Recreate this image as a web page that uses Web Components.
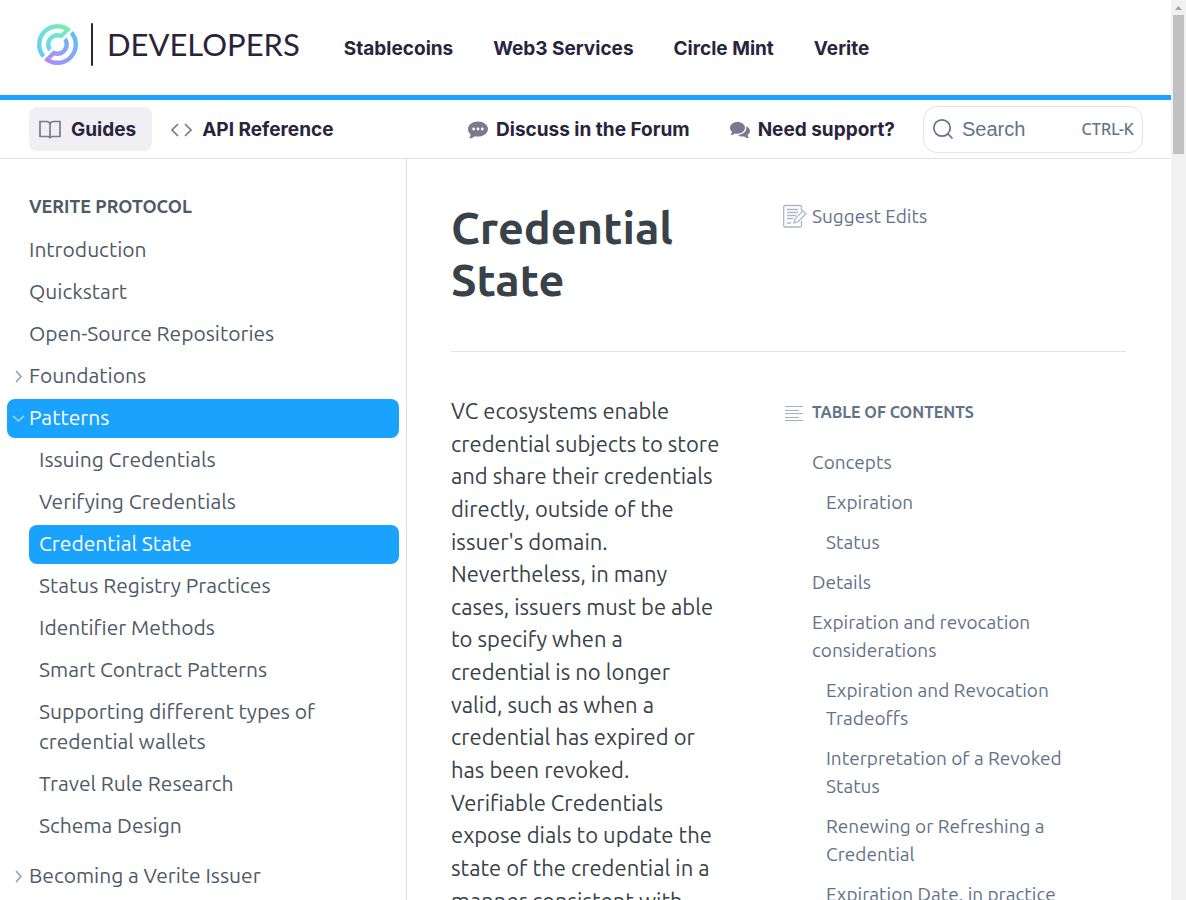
<!DOCTYPE html>
<html lang="en">
<head>
<meta charset="utf-8">
<meta name="viewport" content="width=device-width, initial-scale=1">
<title>Credential State</title>
<style>
  html, body { margin: 0; height: 100%; background: #fff; }
  body {
    font-family: Ubuntu, "Noto Sans", sans-serif;
    color: #384248;
    --brand: #1aa2ff;
    --ink: #29233b;
    --muted: #637288;
    --side: #4f5a66;
    --line: #e3e3e5;
    --header-font: Inter, "Open Sans", sans-serif;
  }
</style>
</head>
<body>
<docs-app>
  <site-header slot="header"></site-header>
  <sub-nav slot="subnav"></sub-nav>
  <side-nav slot="side" heading="Verite Protocol">
    <side-item>Introduction</side-item>
    <side-item>Quickstart</side-item>
    <side-item>Open-Source Repositories</side-item>
    <side-item arrow="right">Foundations</side-item>
    <side-item arrow="down" active>Patterns</side-item>
    <side-group>
      <side-item child>Issuing Credentials</side-item>
      <side-item child>Verifying Credentials</side-item>
      <side-item child active>Credential State</side-item>
      <side-item child>Status Registry Practices</side-item>
      <side-item child>Identifier Methods</side-item>
      <side-item child>Smart Contract Patterns</side-item>
      <side-item child>Supporting different types of credential wallets</side-item>
      <side-item child>Travel Rule Research</side-item>
      <side-item child>Schema Design</side-item>
    </side-group>
    <side-item arrow="right">Becoming a Verite Issuer</side-item>
  </side-nav>
  <doc-article heading="Credential State">
    <p>VC ecosystems enable credential subjects to store and share their credentials directly, outside of the issuer's domain. Nevertheless, in many cases, issuers must be able to specify when a credential is no longer valid, such as when a credential has expired or has been revoked. Verifiable Credentials expose dials to update the state of the credential in a manner consistent with</p>
    <toc-list slot="toc">
      <toc-item>Concepts</toc-item>
      <toc-item sub>Expiration</toc-item>
      <toc-item sub>Status</toc-item>
      <toc-item>Details</toc-item>
      <toc-item>Expiration and revocation considerations</toc-item>
      <toc-item sub>Expiration and Revocation Tradeoffs</toc-item>
      <toc-item sub>Interpretation of a Revoked Status</toc-item>
      <toc-item sub>Renewing or Refreshing a Credential</toc-item>
      <toc-item sub>Expiration Date, in practice</toc-item>
    </toc-list>
  </doc-article>
</docs-app>

<script>
const define = (name, render) => customElements.define(name, class extends HTMLElement {
  connectedCallback() {
    if (this.shadowRoot) return;
    this.attachShadow({ mode: 'open' }).innerHTML = render(this);
  }
});

define('docs-app', () => `
<style>
  :host { display: grid; grid-template-columns: minmax(0, 1fr) 15px; height: 100vh; overflow: hidden; }
  .page { display: flex; flex-direction: column; min-height: 0; }
  .body { display: flex; flex: 1; min-height: 0; }
  .side { flex: none; width: 406px; border-right: 1px solid #dcdfe2; overflow: auto; scrollbar-width: none; }
  main { flex: 1; min-width: 0; overflow: auto; scrollbar-width: none; }
</style>
<div class="page">
  <slot name="header"></slot>
  <slot name="subnav"></slot>
  <div class="body">
    <div class="side"><slot name="side"></slot></div>
    <main><slot></slot></main>
  </div>
</div>
<page-scrollbar></page-scrollbar>`);

define('page-scrollbar', () => `
<style>
  :host { display: block; background: #f1f1f1; }
  svg { display: block; height: 15px; }
  div { height: 139px; margin: 0 2px; background: #c1c1c1; }
</style>
<svg width="15" height="15" aria-hidden="true"><path d="M4 10h7L7.500 6z" fill="#a3a3a3"/></svg>
<div></div>`);

define('site-header', () => `
<style>
  :host { display: block; flex: none; border-bottom: 5px solid var(--brand); }
  header { display: flex; align-items: center; gap: 44px; height: 95px; padding: 0 36px; box-sizing: border-box; }
  a { color: var(--ink); text-decoration: none; }
  .logo { display: flex; align-items: center; height: 44px; padding-bottom: 7px; }
  .bar { width: 2px; height: 43px; margin: 0 14px 0 12px; background: var(--ink); border-radius: 1px; }
  .word { font: 400 31px/44px Lato, sans-serif; }
  nav { display: flex; gap: 40px; padding-top: 2px; font: 700 19px/24px var(--header-font); }
</style>
<header>
  <a class="logo" href="#" aria-label="Circle Developers">
    <svg width="43" height="43" viewBox="0 0 43 43" fill="none" stroke-width="4.400" aria-hidden="true">
      <defs>
        <linearGradient id="a" gradientUnits="userSpaceOnUse" x1="5" y1="35" x2="34" y2="5"><stop offset="0" stop-color="#5fcdf8"/><stop offset=".5" stop-color="#6fdfdc"/><stop offset="1" stop-color="#79efa8"/></linearGradient>
        <linearGradient id="b" gradientUnits="userSpaceOnUse" x1="10" y1="38" x2="38" y2="10"><stop offset="0" stop-color="#b18af5"/><stop offset=".5" stop-color="#8ba3fa"/><stop offset="1" stop-color="#5cc0fa"/></linearGradient>
        <clipPath id="c"><path d="M-5-5h51L-5 46z"/></clipPath>
        <clipPath id="d"><path d="M48 48H-3L48-3z"/></clipPath>
      </defs>
      <g stroke="url(#a)" clip-path="url(#c)"><circle cx="21.500" cy="21.500" r="18.300"/><circle cx="21.500" cy="21.500" r="9.200"/><path d="M25.500 13.100l7.200-7.200"/></g>
      <g stroke="url(#b)" clip-path="url(#d)"><circle cx="21.500" cy="21.500" r="18.300"/><circle cx="21.500" cy="21.500" r="9.200"/><path d="M17.500 29.900l-7.200 7.200"/></g>
    </svg>
    <span class="bar"></span><span class="word">DEVELOPERS</span>
  </a>
  <nav aria-label="Products"><a href="#">Stablecoins</a><a href="#">Web3 Services</a><a href="#">Circle Mint</a><a href="#">Verite</a></nav>
</header>`);

define('sub-nav', () => `
<style>
  :host { display: block; flex: none; border-bottom: 1px solid var(--line); }
  .row { display: flex; align-items: center; height: 58px; padding: 0 28px 0 29px; font: 700 19px/24px var(--header-font); }
  a { display: flex; align-items: center; gap: 10px; height: 44px; padding-top: 2px; box-sizing: border-box; color: var(--ink); text-decoration: none; white-space: nowrap; }
  nav { display: flex; gap: 8px; }
  nav a { padding: 2px 16px 0 10px; border-radius: 8px; }
  nav a[aria-current] { background: #f0eff4; }
  .help { display: flex; gap: 40px; margin: 0 28px 0 auto; }
  .help a { gap: 8px; }
  svg { flex: none; }
  button {
    display: flex; align-items: center; gap: 8px; width: 220px; height: 47px; padding: 0 8px;
    background: #fff; border: 1px solid var(--line); border-radius: 14px; box-sizing: border-box;
    color: var(--muted); font: 400 20px/24px "Liberation Sans", Arial, sans-serif; text-align: left; cursor: pointer;
  }
  kbd { margin-left: auto; font: 500 16px/24px Ubuntu, "Noto Sans", sans-serif; }
</style>
<div class="row">
  <nav aria-label="Sections">
    <a href="#" aria-current="page">
      <svg width="22" height="20" viewBox="0 0 22 20" fill="none" stroke="#7d788c" stroke-width="1.700" aria-hidden="true"><path d="M1 1.500h6.500c2 0 3.500 1.500 3.500 3v14c0-1.300-1-2-2.500-2H1zM21 1.500h-6.500c-2 0-3.500 1.500-3.500 3v14c0-1.300 1-2 2.500-2H21z"/></svg>Guides</a>
    <a href="#">
      <svg width="22" height="16" viewBox="0 0 22 16" fill="none" stroke="#7d788c" stroke-width="1.700" aria-hidden="true"><path d="M8 2 2 8l6 6M15 2l6 6-6 6"/></svg>API Reference</a>
  </nav>
  <div class="help">
    <a href="#">
      <svg width="20" height="18" viewBox="0 0 20 18" aria-hidden="true"><path fill="#7d788c" d="M10 .5C4.600.5 0 3.700 0 8c0 2.100 1 3.900 2.600 5.200-.1 1.400-.5 2.700-1.300 4.300 2.200-.2 4.200-1 5.600-2.200 1 .2 2 .3 3.100.3 5.500 0 10-3.300 10-7.600S15.500.5 10 .5z"/><g fill="#fff"><circle cx="5.700" cy="8" r="1.400"/><circle cx="10" cy="8" r="1.400"/><circle cx="14.300" cy="8" r="1.400"/></g></svg>Discuss in the Forum</a>
    <a href="#">
      <svg width="20" height="18" viewBox="0 0 20 18" fill="#7d788c" aria-hidden="true"><path d="M7.500 1C3.400 1 0 3.500 0 6.800c0 1.600.8 3 2 4-.1 1.300-.6 2.300-1.400 3.300 1.600 0 3.100-.6 4.200-1.700.9.200 1.700.3 2.700.3 4.200 0 7.500-2.600 7.500-5.900S11.700 1 7.500 1z"/><path d="M16.300 5.300c.8 4.800-3 8.500-8.300 8.600 1.300 1.200 3.600 1.900 6.200 1.500 1.300 1 2.700 1.500 4.800 1.500-.9-1-1.300-2-1.400-3.200 1.500-.9 2.300-2 2.400-3.400.1-2.200-1.400-4-3.700-5z"/></svg>Need support?</a>
  </div>
  <button type="button">
    <svg width="22" height="22" viewBox="0 0 22 22" fill="none" stroke="currentColor" stroke-width="1.700" aria-hidden="true"><circle cx="10" cy="10" r="8.200"/><path d="m16 16 4.500 4.500"/></svg>
    <span>Search</span><kbd>CTRL-K</kbd>
  </button>
</div>`);

define('side-nav', el => `
<style>
  :host { display: block; }
  nav { display: flex; flex-direction: column; gap: 3px; padding: 36px 7px 20px; }
  h2 { margin: 0 0 11px; padding-left: 22px; font: 700 18px/22px Ubuntu, "Noto Sans", sans-serif; color: var(--side); text-transform: uppercase; }
</style>
<nav aria-label="${el.getAttribute('heading')}"><h2>${el.getAttribute('heading')}</h2><slot></slot></nav>`);

define('side-group', () => `
<style>:host { display: flex; flex-direction: column; gap: 3px; padding: 0 0 8px 22px; }</style>
<slot></slot>`);

define('side-item', el => {
  const arrow = el.getAttribute('arrow');
  const d = arrow === 'down' ? 'M1 4l5.500 5L12 4' : 'M4 1l5 5.500L4 12';
  return `
<style>
  :host { display: block; }
  a { display: flex; align-items: flex-start; padding: 3px 48px 6px 22px; border-radius: 8px; color: var(--side); font-size: 21px; line-height: 30px; text-decoration: none; }
  svg { flex: none; margin: 10px 4px 0 -17px; opacity: .6; }
  :host([child]) a { padding-left: 10px; }
  :host([active]) a { background: var(--brand); color: #fff; }
</style>
<a href="#"${el.hasAttribute('active') ? ' aria-current="true"' : ''}>${arrow ? `<svg width="13" height="13" viewBox="0 0 13 13" fill="none" stroke="currentColor" stroke-width="1.500" aria-hidden="true"><path d="${d}"/></svg>` : ''}<span><slot></slot></span></a>`;
});

define('doc-article', el => `
<style>
  :host { display: block; padding: 0 45px 0 44px; }
  .cols { display: grid; grid-template-columns: 40% minmax(0, 1fr); gap: 62px; }
  header { padding: 43px 0 45px; border-bottom: 1px solid var(--line); }
  h1 { margin: 0; font-size: 45px; line-height: 52px; font-weight: 700; }
  .edit { display: flex; align-items: center; align-self: start; gap: 5px; color: var(--muted); font-size: 19px; line-height: 28px; text-decoration: none; }
  .body { padding-top: 43px; }
  ::slotted(p) { margin: 0; font-size: 22px; line-height: 1.484; }
</style>
<article>
  <header class="cols">
    <h1>${el.getAttribute('heading')}</h1>
    <a class="edit" href="#">
      <svg width="24" height="24" viewBox="0 0 24 24" fill="none" stroke="#adb6c6" stroke-width="1.300" aria-hidden="true"><path d="M18.500 7V3a1.500 1.500 0 0 0-1.500-1.500H2A1.500 1.500 0 0 0 .7 3v18.500A1.500 1.500 0 0 0 2 23h15a1.500 1.500 0 0 0 1.500-1.500V17M4 5.500h11M4 8.500h11M4 11.500h9M4 14.500h6M4 19h4"/><path d="m11 19 1.300-4.500 7.700-7.700 3 3-7.700 7.700z"/></svg>Suggest Edits</a>
  </header>
  <div class="cols body"><slot></slot><slot name="toc"></slot></div>
</article>`);

define('toc-list', () => `
<style>
  :host { display: block; color: var(--muted); padding: 7px 48px 40px 2px; }
  h2 { display: flex; align-items: center; gap: 8px; margin: 0 0 26px; font-size: 16px; line-height: 20px; font-weight: 700; }
  nav { display: flex; flex-direction: column; gap: 12px; padding-left: 27px; }
</style>
<h2><svg width="19" height="18" viewBox="0 0 19 18" stroke="#a4afc0" aria-hidden="true"><path d="M0 3.500h18M0 7.500h14M0 10.500h18M0 14.500h14M0 17.500h18"/></svg>TABLE OF CONTENTS</h2>
<nav aria-label="Table of contents"><slot></slot></nav>`);

define('toc-item', () => `
<style>
  :host { display: block; font-size: 19px; line-height: 28px; }
  :host([sub]) { padding-left: 14px; }
  a { color: inherit; text-decoration: none; }
</style>
<a href="#"><slot></slot></a>`);
</script>
</body>
</html>
